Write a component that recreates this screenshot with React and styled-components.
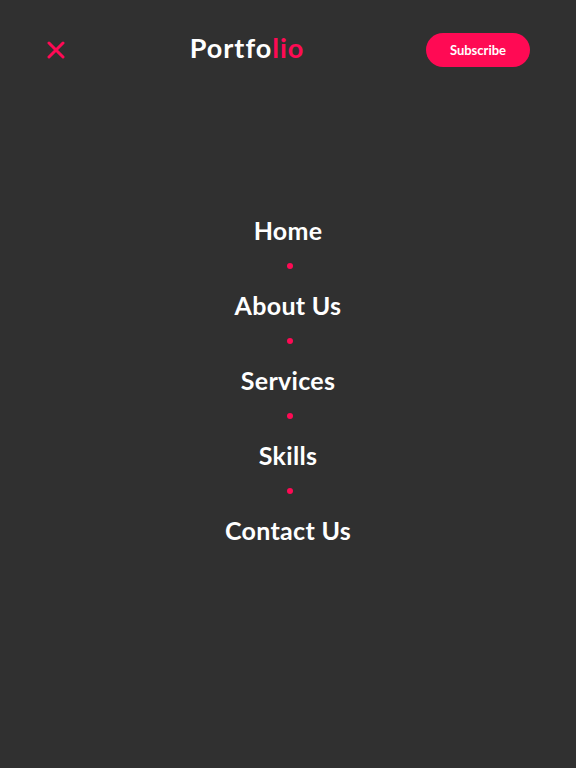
import React from "react";
import styled, { createGlobalStyle } from "styled-components";

const Global = createGlobalStyle`
  html, body {
    margin: 0;
    padding: 0;
    background: #303030;
  }
  body {
    font-family: "Lato", "Noto Sans", sans-serif;
  }
`;

const Page = styled.div`
  min-height: 100vh;
  display: flex;
  flex-direction: column;
  background: #303030;
  color: #fff;
`;

const Header = styled.header`
  display: flex;
  align-items: center;
  justify-content: space-between;
  padding: 33px 46px 0 46px;
  height: 34px;
`;

const CloseButton = styled.button`
  width: 20px;
  height: 20px;
  padding: 0;
  border: none;
  background: none;
  display: flex;
  align-items: center;
  justify-content: center;
  cursor: pointer;
`;

const Logo = styled.div`
  font-size: 27px;
  font-weight: 700;
  letter-spacing: 1px;
  margin: 0 0 6px 2px;
  color: #fff;
`;

const Accent = styled.span`
  color: #ff0a54;
`;

const SubscribeButton = styled.button`
  width: 104px;
  height: 34px;
  border: none;
  border-radius: 17px;
  background: #ff0a54;
  color: #fff;
  font-family: "Lato", sans-serif;
  font-weight: 700;
  font-size: 13px;
`;

const Nav = styled.nav`
  flex: 1;
  display: flex;
  flex-direction: column;
  align-items: center;
  justify-content: center;
  padding-bottom: 76px;
`;

const NavLink = styled.a`
  display: block;
  font-size: 25px;
  font-weight: 700;
  line-height: 30px;
  color: #fff;
  text-decoration: none;
  letter-spacing: 0.3px;
`;

const Dot = styled.span`
  display: block;
  width: 6px;
  height: 6px;
  border-radius: 50%;
  background: #ff0a54;
  margin: 18px 0 21px 4px;
`;

const links = ["Home", "About Us", "Services", "Skills", "Contact Us"];

const CloseIcon = () => (
  <svg width="18" height="18" viewBox="0 0 18 18">
    <path
      d="M2 2 L16 16 M16 2 L2 16"
      stroke="#ff0a54"
      strokeWidth="3"
      strokeLinecap="round"
    />
  </svg>
);

const App = () => (
  <Page>
    <Global />
    <Header>
      <CloseButton>
        <CloseIcon />
      </CloseButton>
      <Logo>
        Portfo<Accent>lio</Accent>
      </Logo>
      <SubscribeButton>Subscribe</SubscribeButton>
    </Header>
    <Nav>
      {links.map((name, i) => (
        <React.Fragment key={name}>
          <NavLink href="#">{name}</NavLink>
          {i === links.length - 1 ? null : <Dot />}
        </React.Fragment>
      ))}
    </Nav>
  </Page>
);

export default App;
